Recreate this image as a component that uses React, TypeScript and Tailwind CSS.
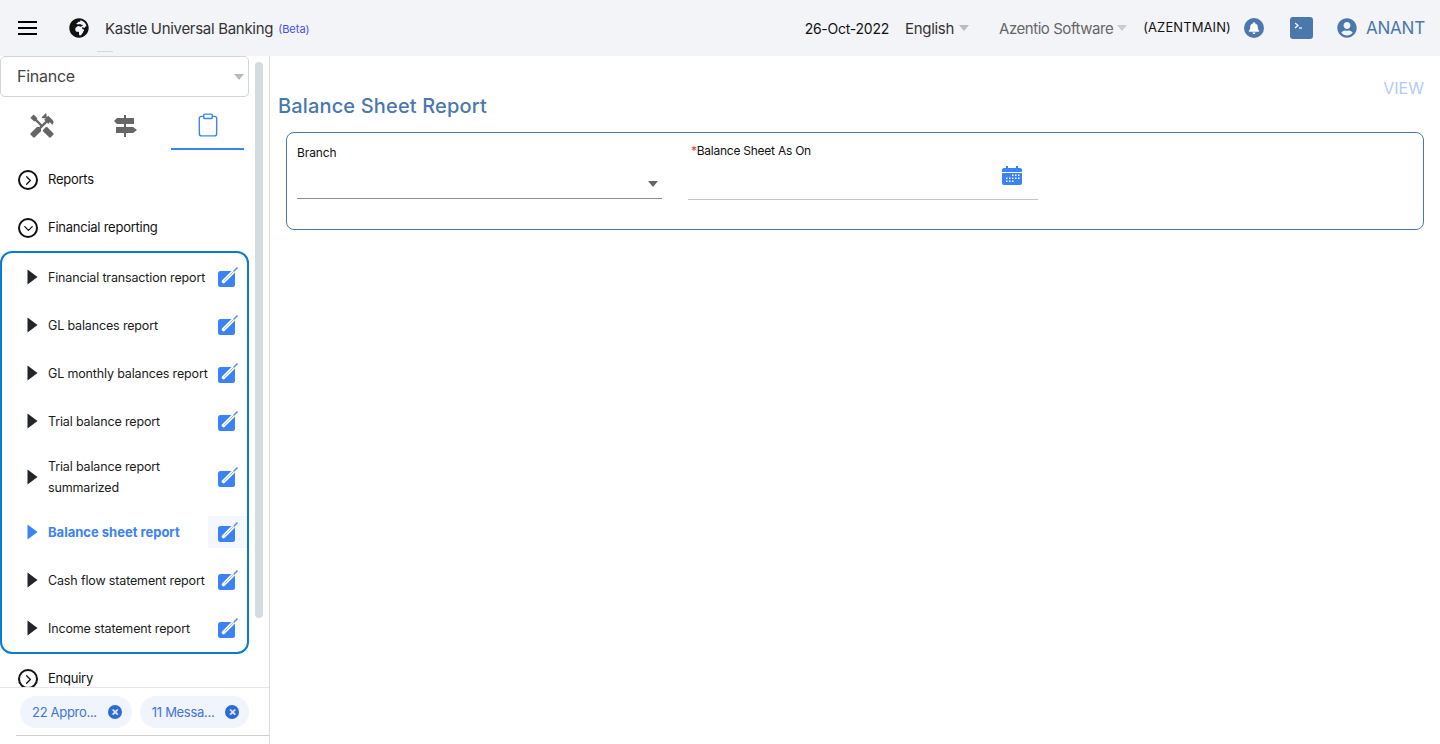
import { Clipboard, ChevronRight, ChevronDown } from "lucide-react";
import { FaGlobeAfrica, FaUserCircle, FaBell } from "react-icons/fa";
import { MdHandyman } from "react-icons/md";

const REPORT_ITEMS = [
  { title: "Financial transaction report" },
  { title: "GL balances report" },
  { title: "GL monthly balances report" },
  { title: "Trial balance report" },
  { title: "Trial balance report summarized", tall: true },
  { title: "Balance sheet report", active: true },
  { title: "Cash flow statement report" },
  { title: "Income statement report" },
];

function Caret({ className }: { className: string }) {
  return (
    <svg width="10" height="6" viewBox="0 0 10 6" className={className}>
      <path d="M0 0h10L5 6z" fill="currentColor" />
    </svg>
  );
}

function EditIcon() {
  return (
    <svg width="20" height="20" viewBox="0 0 20 20" className="ml-px">
      <rect x="0" y="4" width="17" height="16" rx="2.5" fill="#3b82f6" />
      <path d="M5.5 14.5L15 5" stroke="#fff" strokeWidth="3.6" strokeLinecap="round" />
      <path d="M6.5 13.5L15 5" stroke="#9cbffb" strokeWidth="1" />
      <path d="M15.5 4.5L19.5 0.5" stroke="#5f97f7" strokeWidth="1.6" />
    </svg>
  );
}

function CircleChevron({ open }: { open?: boolean }) {
  return (
    <span className="flex h-5 w-5 items-center justify-center rounded-full border-2 border-[#111]">
      {open ? (
        <ChevronDown className="h-[15px] w-[15px] text-[#111]" strokeWidth={2} />
      ) : (
        <ChevronRight className="h-[15px] w-[15px] text-[#111]" strokeWidth={2} />
      )}
    </span>
  );
}

function GroupRow({ title, open }: { title: string; open?: boolean }) {
  return (
    <div className="flex h-12 shrink-0 items-center gap-[10px] pl-[18px] pt-0.5 text-[13px] tracking-[-0.25px] text-[#111]">
      <CircleChevron open={open} />
      <span>{title}</span>
    </div>
  );
}

function Chip({ label }: { label: string }) {
  return (
    <div className="flex h-8 items-center gap-[11px] rounded-2xl bg-[#eff4fd] pl-3 pr-[10px] text-[13px] tracking-[-0.3px] text-[#3f73e0]">
      <span className="pt-0.5">{label}</span>
      <span className="flex h-[14px] w-[14px] items-center justify-center rounded-full bg-[#2f6bd8] text-[12px] font-bold leading-none text-[#dfe9fb]">
        ×
      </span>
    </div>
  );
}

export default function App() {
  return (
    <div className="flex h-[744px] w-[1440px] flex-col overflow-hidden bg-white font-['Inter',sans-serif]">
      {/* Header */}
      <header className="relative flex h-14 shrink-0 items-center bg-[#f3f4f8] pl-[18px] pr-[15px]">
        <div className="flex w-[19px] flex-col gap-1">
          <span className="h-0.5 bg-black" />
          <span className="h-0.5 bg-black" />
          <span className="h-0.5 bg-black" />
        </div>
        <FaGlobeAfrica className="ml-[32px] h-5 w-5 text-[#111]" />
        <span className="ml-4 pt-0.5 text-[15px] tracking-[-0.3px] text-[#333]">Kastle Universal Banking</span>
        <span className="ml-[5px] mt-0.5 text-[11px] text-[#4a4af0]">(Beta)</span>
        <span className="absolute left-[97px] top-[51px] h-px w-4 bg-[#d5d7dc]" />

        <div className="ml-auto flex items-center">
          <span className="text-[14px] tracking-[-0.25px] text-[#111]">26-Oct-2022</span>
          <span className="ml-4 pt-0.5 text-[15px] tracking-[-0.3px] text-[#333]">English</span>
          <Caret className="ml-[5px] text-[#bbb]" />
          <span className="ml-[30px] pt-0.5 text-[15px] tracking-[-0.45px] text-[#666]">Azentio Software</span>
          <Caret className="ml-1 text-[#ccc]" />
          <span className="ml-4 text-[13px] tracking-[0.1px] text-[#111]">(AZENTMAIN)</span>
          <span className="ml-[13px] flex h-5 w-5 items-center justify-center rounded-full bg-[#4a78ad]">
            <FaBell className="h-3 w-3 text-white" />
          </span>
          <span className="ml-[26px] flex h-[22px] w-[23px] items-center justify-center rounded-[3px] bg-[#4a78ad]">
            <svg width="23" height="22" viewBox="0 0 23 22">
              <path d="M5 6l3 2.5L5 11" fill="none" stroke="#fff" strokeWidth="1.2" />
              <path d="M9 11h3" stroke="#fff" strokeWidth="1.2" />
            </svg>
          </span>
          <FaUserCircle className="ml-6 h-5 w-5 text-[#4a78ad]" />
          <span className="ml-[9px] pt-0.5 text-[17px] tracking-[-0.2px] text-[#4a78ad]">ANANT</span>
        </div>
      </header>

      <div className="flex min-h-0 flex-1">
        {/* Sidebar */}
        <aside className="flex w-[270px] shrink-0 flex-col border-r border-[#dcdcdc]">
          <div className="flex min-h-0 flex-1">
            <div className="flex w-[249px] shrink-0 flex-col overflow-hidden">
              <div className="flex h-[41px] shrink-0 items-center justify-between rounded-[5px] border border-[#ced4da] pl-4 pr-[4px] text-[16px] tracking-[-0.25px] text-[#444]">
                <span className="-mt-0.5">Finance</span>
                <Caret className="text-[#bbb]" />
              </div>
              <div className="mb-[5px] flex h-[53px] shrink-0">
                <div className="flex w-[85px] items-center justify-center pr-[2px] pt-[5px]">
                  <MdHandyman className="h-[28px] w-[28px] text-[#666]" />
                </div>
                <div className="flex w-[80px] items-center justify-center pt-[5px]">
                  <svg width="24" height="24" viewBox="0 0 24 24" className="text-[#666]">
                    <path d="M11 1h2v22h-2z" fill="currentColor" />
                    <path d="M1 7l3-3h17v6H4z" fill="currentColor" />
                    <path d="M3 13h17l4 3-4 3H3z" fill="currentColor" />
                  </svg>
                </div>
                <div className="ml-[6px] flex w-[73px] items-center justify-center border-b-2 border-[#3b82f6] pt-[5px]">
                  <Clipboard className="h-[26px] w-[26px] text-[#3b82f6]" strokeWidth={1.3} />
                </div>
              </div>

              <GroupRow title="Reports" />
              <GroupRow title="Financial reporting" open />

              <div className="flex w-[249px] shrink-0 flex-col rounded-xl border-2 border-[#0a7bd0]">
                {REPORT_ITEMS.map((item) => (
                  <div
                    key={item.title}
                    className={`flex items-center pl-[25px] ${item.tall ? "h-[63px]" : "h-12"} ${
                      item.active
                        ? "text-[13px] font-bold text-[#3b82f6]"
                        : "text-[12.5px] tracking-[-0.15px] text-[#1a1a1a]"
                    }`}
                  >
                    <svg width="11" height="16" viewBox="0 0 11 16" className="shrink-0">
                      <path d="M0.5 0.5L10.5 8L0.5 15.5z" fill={item.active ? "#3b82f6" : "#22252a"} />
                    </svg>
                    <span
                      className={`ml-[10px] min-w-0 flex-1 leading-[21px] ${item.tall ? "" : "whitespace-nowrap"}`}
                    >
                      {item.title}
                    </span>
                    <span
                      className={`flex h-8 w-[39px] shrink-0 items-center justify-center ${
                        item.active ? "bg-[#f4f7fd]" : ""
                      }`}
                    >
                      <EditIcon />
                    </span>
                  </div>
                ))}
              </div>

              <GroupRow title="Enquiry" />
            </div>
            <div className="ml-[6px] mt-1.5 h-[556px] w-2 rounded bg-[#d3dce0]" />
          </div>

          {/* Footer chips */}
          <div className="h-[57px] shrink-0 border-t border-[#e5e5e5] pt-2">
            <div className="flex gap-2 pl-5">
              <Chip label="22 Appro..." />
              <Chip label="11 Messa..." />
            </div>
            <div className="ml-4 mt-[7px] h-px bg-[#cfcfcf]" />
          </div>
        </aside>

        {/* Main */}
        <main className="min-w-0 flex-1 pl-2 pr-4">
          <div className="flex h-[76px] justify-between">
            <h1 className="mt-[38px] text-[20px] font-medium leading-6 tracking-[0.15px] text-[#4a78ad]">
              Balance Sheet Report
            </h1>
            <span className="mt-[23px] text-[16px] leading-[18px] text-[#b3cbf6]">VIEW</span>
          </div>
          <div className="ml-2 flex h-[98px] gap-[26px] rounded-lg border border-[#4a78ad] pl-[10px]">
            <div className="w-[365px]">
              <div className="mt-[12px] text-[12px] leading-4 tracking-[-0.1px] text-[#111]">Branch</div>
              <div className="flex h-[38px] items-center justify-end border-b border-[#8f8f8f] pr-[4px] pt-[9px]">
                <Caret className="text-[#666]" />
              </div>
            </div>
            <div className="w-[350px]">
              <div className="mt-[10px] pl-[3px] text-[12px] leading-4 tracking-[-0.25px] text-[#111]">
                <span className="text-[#e53935]">*</span>Balance Sheet As On
              </div>
              <div className="flex h-[41px] items-start justify-end border-b border-[#c4c4c4] pr-[16px] pt-[6px]">
                <svg width="20" height="20" viewBox="0 0 20 20">
                  <path d="M4 1h2v2h8V1h2v2h2a2 2 0 012 2v2H0V5a2 2 0 012-2h2z" fill="#3b82f6" />
                  <path d="M0 8h20v10a2 2 0 01-2 2H2a2 2 0 01-2-2z" fill="#3b82f6" />
                  <path
                    d="M10 9.5h1.5V11H10zM13 9.5h1.5V11H13zM16 9.5h1.5V11H16zM4 12.5h1.5V14H4zM7 12.5h1.5V14H7zM10 12.5h1.5V14H10zM13 12.5h1.5V14H13zM16 12.5h1.5V14H16zM4 15.5h1.5V17H4zM7 15.5h1.5V17H7zM10 15.5h1.5V17H10z"
                    fill="#fff"
                  />
                </svg>
              </div>
            </div>
          </div>
        </main>
      </div>
    </div>
  );
}
